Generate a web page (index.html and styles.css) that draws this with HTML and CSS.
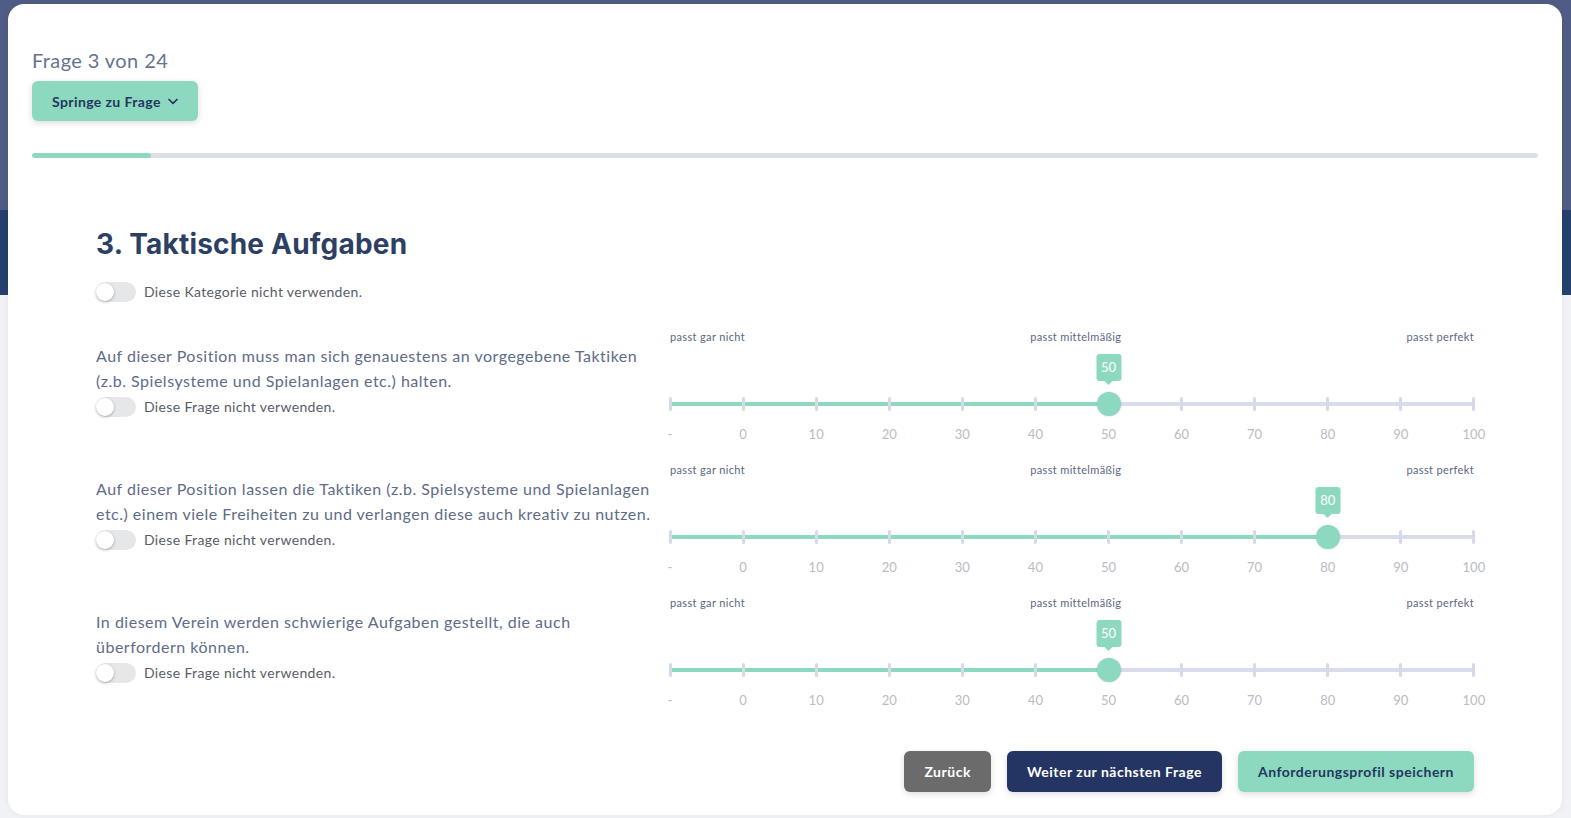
FILE: index.html
```html
<!DOCTYPE html>
<html lang="de">
<head>
<meta charset="utf-8">
<title>Anforderungsprofil</title>
<link rel="stylesheet" href="styles.css">
</head>
<body>
<div class="modal">
  <div class="top">
    <div class="counter">Frage 3 von 24</div>
    <button class="btn btn-green jump">Springe zu Frage
      <svg width="10" height="7" viewBox="0 0 10 7"><path d="M1 1.5 L5 5.3 L9 1.5" fill="none" stroke="#24365e" stroke-width="1.7" stroke-linecap="round" stroke-linejoin="round"/></svg>
    </button>
    <div class="progress"><div class="progress-fill" style="width:7.9%"></div></div>
  </div>

  <div class="content">
    <h2 class="title">3. Taktische Aufgaben</h2>
    <label class="toggle-row cat">
      <span class="toggle"><span class="knob"></span></span>
      <span class="toggle-label">Diese Kategorie nicht verwenden.</span>
    </label>

    <div class="questions">
      <div class="q-row">
        <div class="q-left">
          <p class="q-text">Auf dieser Position muss man sich genauestens an vorgegebene Taktiken (z.b. Spielsysteme und Spielanlagen etc.) halten.</p>
          <label class="toggle-row">
            <span class="toggle"><span class="knob"></span></span>
            <span class="toggle-label">Diese Frage nicht verwenden.</span>
          </label>
        </div>
        <div class="slider">
          <div class="slider-labels"><span>passt gar nicht</span><span>passt mittelmäßig</span><span>passt perfekt</span></div>
          <div class="slider-body">
            <div class="track"></div>
            <div class="fill" style="width:54.545%"></div>
            <div class="ticks"><i></i><i></i><i></i><i></i><i></i><i></i><i></i><i></i><i></i><i></i><i></i><i></i></div>
            <div class="handle" style="left:54.545%"><span class="tip">50</span></div>
          </div>
          <div class="slider-nums"><span>-</span><span>0</span><span>10</span><span>20</span><span>30</span><span>40</span><span>50</span><span>60</span><span>70</span><span>80</span><span>90</span><span>100</span></div>
        </div>
      </div>

      <div class="q-row">
        <div class="q-left">
          <p class="q-text">Auf dieser Position lassen die Taktiken (z.b. Spielsysteme und Spielanlagen etc.) einem viele Freiheiten zu und verlangen diese auch kreativ zu nutzen.</p>
          <label class="toggle-row">
            <span class="toggle"><span class="knob"></span></span>
            <span class="toggle-label">Diese Frage nicht verwenden.</span>
          </label>
        </div>
        <div class="slider">
          <div class="slider-labels"><span>passt gar nicht</span><span>passt mittelmäßig</span><span>passt perfekt</span></div>
          <div class="slider-body">
            <div class="track"></div>
            <div class="fill" style="width:81.818%"></div>
            <div class="ticks"><i></i><i></i><i></i><i></i><i></i><i></i><i></i><i></i><i></i><i></i><i></i><i></i></div>
            <div class="handle" style="left:81.818%"><span class="tip">80</span></div>
          </div>
          <div class="slider-nums"><span>-</span><span>0</span><span>10</span><span>20</span><span>30</span><span>40</span><span>50</span><span>60</span><span>70</span><span>80</span><span>90</span><span>100</span></div>
        </div>
      </div>

      <div class="q-row">
        <div class="q-left">
          <p class="q-text">In diesem Verein werden schwierige Aufgaben gestellt, die auch überfordern können.</p>
          <label class="toggle-row">
            <span class="toggle"><span class="knob"></span></span>
            <span class="toggle-label">Diese Frage nicht verwenden.</span>
          </label>
        </div>
        <div class="slider">
          <div class="slider-labels"><span>passt gar nicht</span><span>passt mittelmäßig</span><span>passt perfekt</span></div>
          <div class="slider-body">
            <div class="track"></div>
            <div class="fill" style="width:54.545%"></div>
            <div class="ticks"><i></i><i></i><i></i><i></i><i></i><i></i><i></i><i></i><i></i><i></i><i></i><i></i></div>
            <div class="handle" style="left:54.545%"><span class="tip">50</span></div>
          </div>
          <div class="slider-nums"><span>-</span><span>0</span><span>10</span><span>20</span><span>30</span><span>40</span><span>50</span><span>60</span><span>70</span><span>80</span><span>90</span><span>100</span></div>
        </div>
      </div>
    </div>

    <div class="actions">
      <button class="btn btn-grey">Zurück</button>
      <button class="btn btn-navy">Weiter zur nächsten Frage</button>
      <button class="btn btn-green">Anforderungsprofil speichern</button>
    </div>
  </div>
</div>
</body>
</html>
```

FILE: styles.css
```css
* { box-sizing: border-box; }

html, body {
  margin: 0;
  padding: 0;
}

body {
  font-family: "Lato", "Liberation Sans", sans-serif;
  background: linear-gradient(to bottom, #4f5c85 0, #4f5c85 210px, #24416e 210px, #24416e 295px, #f0f2f5 295px);
  min-height: 818px;
  padding-top: 4px;
  padding-left: 8px;
  padding-right: 9px;
}

.modal {
  background: #ffffff;
  border-radius: 16px;
  height: 811px;
  padding: 42px 24px 0 24px;
  box-shadow: 0 0 6px rgba(0, 0, 0, 0.06);
}

.counter {
  font-size: 20px;
  line-height: 28px;
  letter-spacing: 0.4px;
  color: #66738f;
}

.btn {
  font-family: "Lato", "Liberation Sans", sans-serif;
  font-weight: 700;
  font-size: 14px;
  letter-spacing: 0.5px;
  height: 41px;
  border: 0;
  border-radius: 6px;
  padding: 0 20px;
  cursor: pointer;
  box-shadow: 0 2px 6px rgba(0, 0, 0, 0.14);
  display: inline-flex;
  align-items: center;
  gap: 7px;
}

.btn-green { background: #8dd9bf; color: #24365e; }
.btn-navy { background: #243463; color: #ffffff; }
.btn-grey { background: #6b6b6b; color: #ffffff; }

.jump {
  margin-top: 7px;
  height: 40px;
  padding: 0 20px;
  letter-spacing: 0.4px;
}

.progress {
  margin-top: 32px;
  height: 5px;
  border-radius: 3px;
  background: #dde1e5;
  overflow: hidden;
}

.progress-fill {
  height: 100%;
  background: #8dd9bf;
  border-radius: 3px;
}

.content {
  padding: 0 64px;
}

.title {
  font-family: "Inter", "Lato", sans-serif;
  font-weight: 700;
  font-size: 28px;
  line-height: 36px;
  color: #2d4064;
  margin: 68px 0 0 0;
  letter-spacing: 0.2px;
}

.toggle-row {
  display: flex;
  align-items: center;
  gap: 8px;
}

.toggle-row.cat {
  margin-top: 20px;
}

.toggle {
  position: relative;
  width: 40px;
  height: 20px;
  border-radius: 10px;
  background: #e5e7e9;
  flex: none;
}

.knob {
  position: absolute;
  left: 0;
  top: 1px;
  width: 18px;
  height: 18px;
  border-radius: 50%;
  background: #ffffff;
  box-shadow: 0 1px 3px rgba(0, 0, 0, 0.3);
}

.toggle-label {
  font-size: 14px;
  letter-spacing: 0.35px;
  color: #575d68;
  line-height: 20px;
}

.questions {
  margin-top: 27px;
  display: flex;
  flex-direction: column;
  gap: 19px;
}

.q-row {
  display: grid;
  grid-template-columns: 560px 804px;
  column-gap: 14px;
}

.q-left {
  padding-top: 14px;
}

.q-text {
  margin: 0 0 4px 0;
  font-size: 16px;
  line-height: 25px;
  letter-spacing: 0.5px;
  color: #5e6b89;
}

.slider-labels {
  display: flex;
  justify-content: space-between;
  font-size: 11px;
  line-height: 16px;
  letter-spacing: 0.35px;
  color: #5b6684;
}

.slider-body {
  position: relative;
  height: 76px;
}

.track {
  position: absolute;
  left: 0;
  right: 0;
  top: 57px;
  height: 4px;
  border-radius: 2px;
  background: #d9dcec;
}

.fill {
  position: absolute;
  left: 0;
  top: 57px;
  height: 4px;
  border-radius: 2px;
  background: #8dd9bf;
}

.ticks {
  position: absolute;
  left: -1.5px;
  right: -1.5px;
  top: 52px;
  display: flex;
  justify-content: space-between;
}

.ticks i {
  display: block;
  width: 3px;
  height: 14px;
  border-radius: 2px;
  background: #d6d9ea;
}

.handle {
  position: absolute;
  top: 47px;
  width: 24px;
  height: 24px;
  margin-left: -12px;
  border-radius: 50%;
  background: #8dd9bf;
  box-shadow: 0 0 2px rgba(110, 90, 230, 0.35);
}

.tip {
  position: absolute;
  left: 50%;
  bottom: 35px;
  transform: translateX(-50%);
  min-width: 25px;
  height: 27px;
  padding: 0 3px;
  border-radius: 3px;
  background: #8dd9bf;
  color: #ffffff;
  font-size: 13px;
  line-height: 27px;
  text-align: center;
}

.tip::after {
  content: "";
  position: absolute;
  left: 50%;
  bottom: -4px;
  margin-left: -4px;
  border-left: 4px solid transparent;
  border-right: 4px solid transparent;
  border-top: 4px solid #8dd9bf;
}

.slider-nums {
  display: flex;
  justify-content: space-between;
  margin-top: 4px;
  font-size: 13px;
  line-height: 18px;
  color: #b9bcc4;
}

.slider-nums span {
  width: 0;
  display: flex;
  justify-content: center;
  white-space: nowrap;
}

.actions {
  display: flex;
  justify-content: flex-end;
  gap: 16px;
  margin-top: 42px;
}
```
